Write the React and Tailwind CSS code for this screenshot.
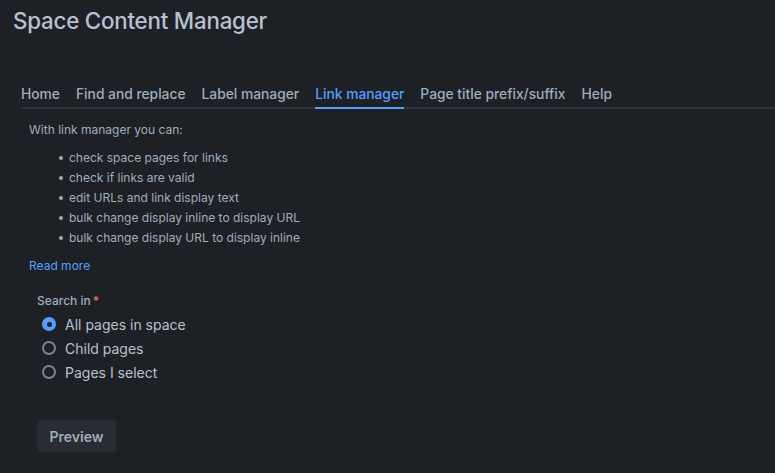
import React from 'react';

const App = () => {
  const tabs = ['Home', 'Find and replace', 'Label manager', 'Link manager', 'Page title prefix/suffix', 'Help'];
  const features = [
    'check space pages for links',
    'check if links are valid',
    'edit URLs and link display text',
    'bulk change display inline to display URL',
    'bulk change display URL to display inline',
  ];
  const options = ['All pages in space', 'Child pages', 'Pages I select'];

  return (
    <div
      className="min-h-[473px] w-full bg-[#1d2125] text-[#9fadbc] overflow-hidden"
      style={{ fontFamily: 'Inter, "Noto Sans", sans-serif' }}
    >
      {/* Title */}
      <h1 className="pl-[13px] pt-[7px] h-[72px] text-[22.3px] leading-[28px] font-medium text-[#b6c2cf] tracking-[-0.2px]">
        Space Content Manager
      </h1>

      {/* Tabs */}
      <div className="pl-[21px]">
        <div className="flex gap-4 border-b-2 border-[#2c333a] h-[37px]">
          {tabs.map((tab) => (
            <div
              key={tab}
              className={
                tab === 'Link manager'
                  ? 'pt-[12px] text-[13.8px] leading-[20px] font-medium text-[#579dff] border-b-2 border-[#579dff] -mb-[2px]'
                  : 'pt-[12px] text-[13.8px] leading-[20px] font-medium text-[#9fadbc]'
              }
            >
              {tab}
            </div>
          ))}
        </div>
      </div>

      {/* Content */}
      <div className="pl-[29px] pt-[11px]">
        <p className="text-[12px] leading-[20px]">With link manager you can:</p>
        <ul className="mt-[8px] pl-[30px]">
          {features.map((f) => (
            <li key={f} className="flex items-center text-[12px] leading-[20px]">
              <span className="w-[4px] h-[4px] rounded-full bg-[#9fadbc] mr-[6px]" />
              {f}
            </li>
          ))}
        </ul>
        <a href="#" className="block mt-[8px] text-[12px] leading-[20px] text-[#579dff]">
          Read more
        </a>

        {/* Form */}
        <div className="pl-[8px] pt-[15px]">
          <div className="text-[12px] leading-[20px] font-medium">
            Search in<span className="text-[#f87168] ml-[2px]">*</span>
          </div>
          <div className="mt-[1px] flex flex-col">
            {options.map((opt, i) => (
              <label key={opt} className="flex items-center h-[24px] text-[14px] text-[#b6c2cf]">
                {i === 0 ? (
                  <span className="w-[14px] h-[14px] ml-[5px] rounded-full bg-[#579dff] flex items-center justify-center">
                    <span className="w-[5px] h-[5px] rounded-full bg-[#1d2125]" />
                  </span>
                ) : (
                  <span className="w-[14px] h-[14px] ml-[5px] rounded-full border-2 border-[#738496]" />
                )}
                <span className="ml-[9px]">{opt}</span>
              </label>
            ))}
          </div>
          <button className="mt-[36px] h-[32px] w-[79px] rounded-[3px] bg-[#272d33] text-[14px] font-semibold text-[#9fadbc]">
            Preview
          </button>
        </div>
      </div>
    </div>
  );
};

export default App;
